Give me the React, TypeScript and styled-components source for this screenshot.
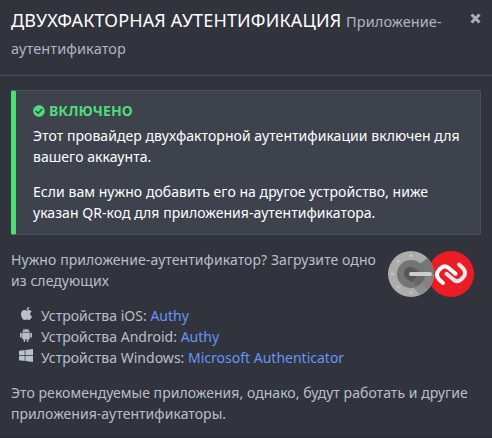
import React from "react";
import styled, { createGlobalStyle } from "styled-components";
import { FaApple, FaCheckCircle } from "react-icons/fa";

const GlobalStyle = createGlobalStyle`
  * { box-sizing: border-box; }
  body {
    margin: 0;
    background: #31343d;
    color: #b9bfcc;
    font: 14px/21px "Noto Sans", "Open Sans", sans-serif;
    letter-spacing: 0.045px;
    overflow: hidden;
  }
`;

const Modal = styled.main`
  height: 438px;
  border-bottom: 1px solid #292c34;
`;

const Header = styled.header`
  display: flex;
  align-items: flex-start;
  justify-content: space-between;
  height: 76px;
  padding: 7px 11px 0;
  border-bottom: 1px solid #4a4e59;
`;

const Title = styled.h1`
  margin: 0;
  width: 440px;
  color: #fff;
  font-size: 18px;
  font-weight: 400;
  line-height: 27px;
  letter-spacing: 0.14px;
`;

const Subtitle = styled.small`
  color: #b0b5c1;
  font-size: 14.5px;
  line-height: 1;
  letter-spacing: 0.1px;
`;

const CloseButton = styled.button`
  display: flex;
  margin: 6px 0 0;
  padding: 0;
  border: 0;
  background: none;
  color: #a9adba;
`;

const Body = styled.section`
  padding: 14px 11px 0;
`;

const Notice = styled.div`
  height: 145px;
  padding: 9px 15px 0 17px;
  border: 1px solid #4c505b;
  border-left: 5px solid #4ddd77;
  border-radius: 2px;
  background: #3e424d;
  color: #fff;
`;

const Status = styled.div`
  display: flex;
  align-items: center;
  gap: 4px;
  height: 21px;
  margin-bottom: 4px;
  color: #4ddd77;
  font-weight: 700;
  letter-spacing: 0.1px;
`;

const Paragraph = styled.p<{ $gap?: number }>`
  margin: 0 0 ${({ $gap = 0 }) => $gap}px;
`;

const Intro = styled.div`
  display: flex;
  justify-content: space-between;
  margin-top: 14px;
  padding-right: 7px;
`;

const IntroText = styled.p`
  width: 372px;
  margin: 0;
  letter-spacing: 0.07px;
  white-space: nowrap;
`;

const Logos = styled.svg`
  flex: none;
  margin-top: 2px;
`;

const Platforms = styled.ul`
  margin: 8px 0 14px;
  padding: 0 0 0 7px;
  list-style: none;
`;

const Platform = styled.li`
  display: flex;
  height: 21px;
  letter-spacing: 0.02px;
`;

const PlatformIcon = styled.span<{ $drop: number }>`
  display: flex;
  justify-content: center;
  width: 16px;
  margin-right: 7px;
  padding-top: ${({ $drop }) => $drop}px;
`;

const Link = styled.a`
  color: #6695f5;
  letter-spacing: 0;
  text-decoration: none;
`;

function AppleIcon() {
  return <FaApple size={15} />;
}

function AndroidIcon() {
  return (
    <svg width="12" height="14" viewBox="0 0 12 14" fill="currentColor">
      <path
        fillRule="evenodd"
        d="M2.2 4.3C2.3 3.1 3 2.2 4 1.7L3.3.4 3.6.2 4.4 1.5Q6 .9 7.6 1.5L8.4.2 8.7.4 8 1.7C9 2.2 9.7 3.1 9.8 4.3ZM4.2 2.5a.45.45 0 1 0 0 .9.45.45 0 0 0 0-.9ZM7.8 2.5a.45.45 0 1 0 0 .9.45.45 0 0 0 0-.9Z"
      />
      <path d="M2.2 4.8h7.6v5.6q0 .8-.8.8h-.6v2a.8.8 0 0 1-1.6 0v-2H5.2v2a.8.8 0 0 1-1.6 0v-2H3q-.8 0-.8-.8Z" />
      <rect x="0" y="4.7" width="1.7" height="5" rx=".85" />
      <rect x="10.3" y="4.7" width="1.7" height="5" rx=".85" />
    </svg>
  );
}

function WindowsIcon() {
  return (
    <svg width="14" height="13" viewBox="0 0 14 13" fill="currentColor">
      <path d="M0 1.8 5.7 1V6.2H0ZM6.4.9 14 0V6.2H6.4ZM0 6.9H5.7V12L0 11.2ZM6.4 6.9H14V13L6.4 12.1Z" />
    </svg>
  );
}

const platforms = [
  { name: "iOS", app: "Authy", Icon: AppleIcon, drop: 1 },
  { name: "Android", app: "Authy", Icon: AndroidIcon, drop: 2 },
  { name: "Windows", app: "Microsoft Authenticator", Icon: WindowsIcon, drop: 2 },
];

function AuthenticatorLogos() {
  return (
    <Logos width="86" height="46" viewBox="0 0 86 46">
      <circle cx="63" cy="23" r="23" fill="#ec1c24" />
      <g fill="none" strokeWidth="4" strokeLinecap="round" strokeLinejoin="round">
        <path d="M71 13.5L74.3 16.5Q79.5 21.5 75 26.5L73 28.5Q69.5 31.5 66 29L58.5 22.8" stroke="#e5e6eb" />
        <path d="M55 32L51.7 29Q46.5 24 51 19L53 17Q56.5 14 60 16.5L67.5 22.7" stroke="#fff" />
      </g>
      <circle cx="23" cy="23" r="23" fill="#acacac" />
      <path d="M23 23L33 12 39.7 6.7Q46 13.5 46 23Z" fill="#767676" />
      <path d="M23 23H46Q46 33 39.3 39.3L33 33Z" fill="#838383" />
      <path d="M33 33L39.3 39.3Q36 42.5 32 44L26 37Z" fill="#8c8c8c" />
      <circle cx="23" cy="23" r="14" fill="#747474" />
      <path d="M18 17Q23 14.5 28 17L34 23H37Q37 27 33 32L29 34L17 27Z" fill="#666" />
      <path d="M16 23a5.8 5.8 0 0 1 9.8-5L29 20.5Q30 23 28 26L23 31L17.5 26Q16 24.8 16 23Z" fill="#555" />
      <path d="M23 23h19" stroke="#ccc" strokeWidth="4" strokeLinecap="round" />
      <g fill="#c4c4c4">
        <circle cx="23" cy="4.5" r="1.6" /><circle cx="10" cy="10" r="1.6" />
        <circle cx="4.5" cy="23" r="1.6" /><circle cx="10" cy="36" r="1.6" />
        <circle cx="23" cy="41.5" r="1.6" />
      </g>
    </Logos>
  );
}

export default function App() {
  return (
    <>
      <GlobalStyle />
      <Modal>
        <Header>
          <Title>
            ДВУХФАКТОРНАЯ АУТЕНТИФИКАЦИЯ <Subtitle>Приложение-аутентификатор</Subtitle>
          </Title>
          <CloseButton aria-label="Закрыть">
            <svg width="11" height="11" viewBox="0 0 11 11">
              <path d="M1.5 1.5l8 8M9.5 1.5l-8 8" stroke="currentColor" strokeWidth="3.1" />
            </svg>
          </CloseButton>
        </Header>
        <Body>
          <Notice>
            <Status><FaCheckCircle size={12} />ВКЛЮЧЕНО</Status>
            <Paragraph $gap={14}>
              Этот провайдер двухфакторной аутентификации включен для<br />вашего аккаунта.
            </Paragraph>
            <Paragraph>
              Если вам нужно добавить его на другое устройство, ниже<br />указан QR-код для приложения-аутентификатора.
            </Paragraph>
          </Notice>
          <Intro>
            <IntroText>Нужно приложение-аутентификатор? Загрузите одно<br />из следующих</IntroText>
            <AuthenticatorLogos />
          </Intro>
          <Platforms>
            {platforms.map(({ name, app, Icon, drop }) => (
              <Platform key={name}>
                <PlatformIcon $drop={drop}><Icon /></PlatformIcon>
                <span>Устройства {name}: <Link>{app}</Link></span>
              </Platform>
            ))}
          </Platforms>
          <Paragraph>
            Это рекомендуемые приложения, однако, будут работать и другие<br />приложения-аутентификаторы.
          </Paragraph>
        </Body>
      </Modal>
    </>
  );
}
